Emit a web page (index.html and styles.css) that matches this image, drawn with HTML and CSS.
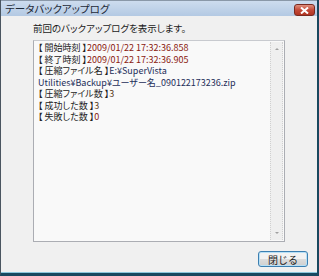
FILE: index.html
```html
<!DOCTYPE html>
<html lang="ja">
<head>
    <meta charset="UTF-8">
    <title>データバックアップログ</title>
    <link rel="stylesheet" href="styles.css">
</head>
<body>
    <div class="window">
        <div class="titlebar">
            <span class="title">データバックアップログ</span>
            <div class="close-btn">
                <svg width="9" height="7" viewBox="0 0 9 7"><path d="M1 0.5 L8 6.5 M8 0.5 L1 6.5" stroke="#fff" stroke-width="2"/></svg>
            </div>
        </div>
        <div class="client">
            <div class="caption">前回のバックアップログを表示します。</div>
            <div class="logbox">
                <div class="log">
                    <div><span class="key">【 開始時刻 】</span><span class="val">2009/01/22 17:32:36.858</span></div>
                    <div><span class="key">【 終了時刻 】</span><span class="val">2009/01/22 17:32:36.905</span></div>
                    <div><span class="key">【 圧縮ファイル名 】</span><span class="path">E:¥SuperVista<br>Utilities¥Backup¥ユーザー名_090122173236.zip</span></div>
                    <div><span class="key">【 圧縮ファイル数 】</span><span class="num">3</span></div>
                    <div><span class="key">【 成功した数 】</span><span class="num">3</span></div>
                    <div><span class="key">【 失敗した数 】</span><span class="val">0</span></div>
                </div>
                <div class="scrollbar">
                    <span class="arrow up"></span>
                    <span class="arrow down"></span>
                </div>
            </div>
            <div class="footer">
                <button class="btn">閉じる</button>
            </div>
        </div>
    </div>
</body>
</html>
```

FILE: styles.css
```css
body {
    margin: 0;
    font-family: "Noto Sans CJK JP", "Noto Sans", sans-serif;
    font-size: 9.5px;
    font-feature-settings: "palt";
    color: #1a1a1a;
}
.window {
    width: 319px;
    height: 276px;
    box-sizing: border-box;
    display: flex;
    flex-direction: column;
    background: #f0f0f0;
    border-left: 1px solid #4a5560;
    border-right: 2px solid #19485f;
    border-bottom: 3px solid #19485f;
    box-shadow: inset 0 -1px 0 #8cc6dc;
}
.titlebar {
    height: 16px;
    display: flex;
    align-items: center;
    justify-content: space-between;
    padding: 0 2px 0 4px;
    background: linear-gradient(#cddcee, #b3c9e3);
    border-top: 1px solid #8a98a8;
    box-sizing: border-box;
}
.title {
    font-size: 10.5px;
    color: #1e2a38;
}
.close-btn {
    width: 21px;
    height: 12px;
    margin-top: 3px;
    box-sizing: border-box;
    border: 1px solid #7a2a20;
    border-radius: 3px;
    background: linear-gradient(#e0907e, #c44a38 50%, #b03422);
    display: flex;
    align-items: center;
    justify-content: center;
}
.client {
    flex: 1;
    display: flex;
    flex-direction: column;
    padding: 6px 0 0 32px;
}
.caption {
    height: 12px;
    line-height: 12px;
    margin-bottom: 6px;
}
.logbox {
    width: 252px;
    height: 202px;
    box-sizing: border-box;
    border: 1px solid #abadb3;
    border-top-color: #c8cacf;
    background: #f9f9f9;
    display: flex;
}
.log {
    flex: 1;
    padding: 1px 0 0 4px;
    line-height: 11.5px;
    font-size: 9px;
}
.key {
    color: #222;
}
.val {
    color: #8a2010;
}
.path {
    color: #1e2e5a;
}
.num {
    color: #5a3a20;
}
.scrollbar {
    width: 11px;
    margin: 1px 1px 1px 0;
    border-left: 1px dotted #d0d0d0;
    border-right: 1px dotted #d0d0d0;
    background: #efefef;
    display: flex;
    flex-direction: column;
    justify-content: space-between;
    align-items: center;
    padding: 6px 0;
}
.arrow {
    width: 0;
    height: 0;
    border-left: 2px solid transparent;
    border-right: 2px solid transparent;
}
.arrow.up {
    border-bottom: 2px solid #a0a0a0;
}
.arrow.down {
    border-top: 2px solid #a0a0a0;
}
.footer {
    display: flex;
    justify-content: flex-end;
    padding: 9px 9px 0 0;
}
.btn {
    width: 50px;
    height: 16px;
    padding: 0;
    font-family: inherit;
    font-size: 10px;
    color: #1a1a1a;
    border: 1px solid #3c7fb1;
    border-radius: 3px;
    background: linear-gradient(#f2f2f2 50%, #dddddd 50%, #cfcfcf);
    box-shadow: inset 0 0 0 1px #b8e0f6;
}
```
